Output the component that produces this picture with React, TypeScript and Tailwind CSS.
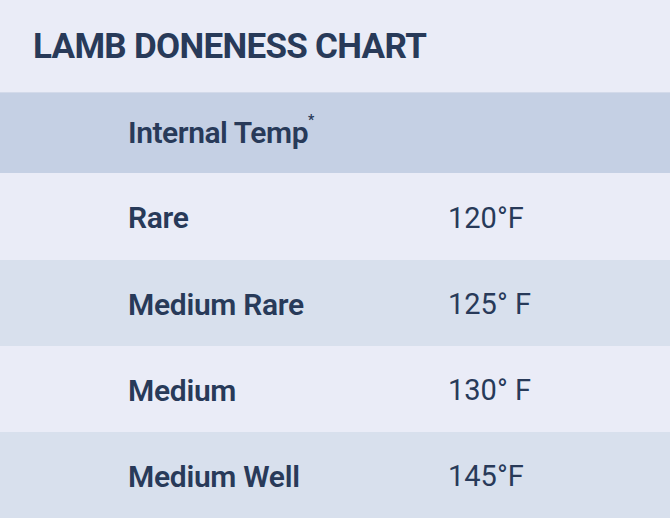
const rows = [
  { label: 'Rare', temp: '120°F' },
  { label: 'Medium Rare', temp: '125° F' },
  { label: 'Medium', temp: '130° F' },
  { label: 'Medium Well', temp: '145°F' },
];

export default function App() {
  return (
    <div
      className="w-[670px] h-[518px] overflow-hidden bg-[#eaecf7] text-[#283a59]"
      style={{ fontFamily: 'Roboto, "Liberation Sans", sans-serif' }}
    >
      <div className="h-[92px] flex items-center pl-[33px]">
        <h2 className="text-[35px] font-bold tracking-[-0.02em] leading-none">LAMB DONENESS CHART</h2>
      </div>
      <div className="h-[81px] flex items-center pl-[128px] bg-[#c5d0e4] border-t border-[#d3daea]">
        <span className="text-[30px] font-semibold tracking-[-0.015em] leading-none">
          Internal Temp<sup className="text-[14px] align-super">*</sup>
        </span>
      </div>
      {rows.map((r, i) => (
        <div
          key={r.label}
          className={`${i === 0 ? 'h-[87px]' : 'h-[86px]'} flex items-center pt-[3px] ${i % 2 ? 'bg-[#d8e0ed]' : 'bg-[#eaecf7]'}`}
        >
          <span className="pl-[128px] w-[448px] text-[30px] font-semibold tracking-[-0.01em] leading-none">{r.label}</span>
          <span className="text-[29px] leading-none">{r.temp}</span>
        </div>
      ))}
    </div>
  );
}
